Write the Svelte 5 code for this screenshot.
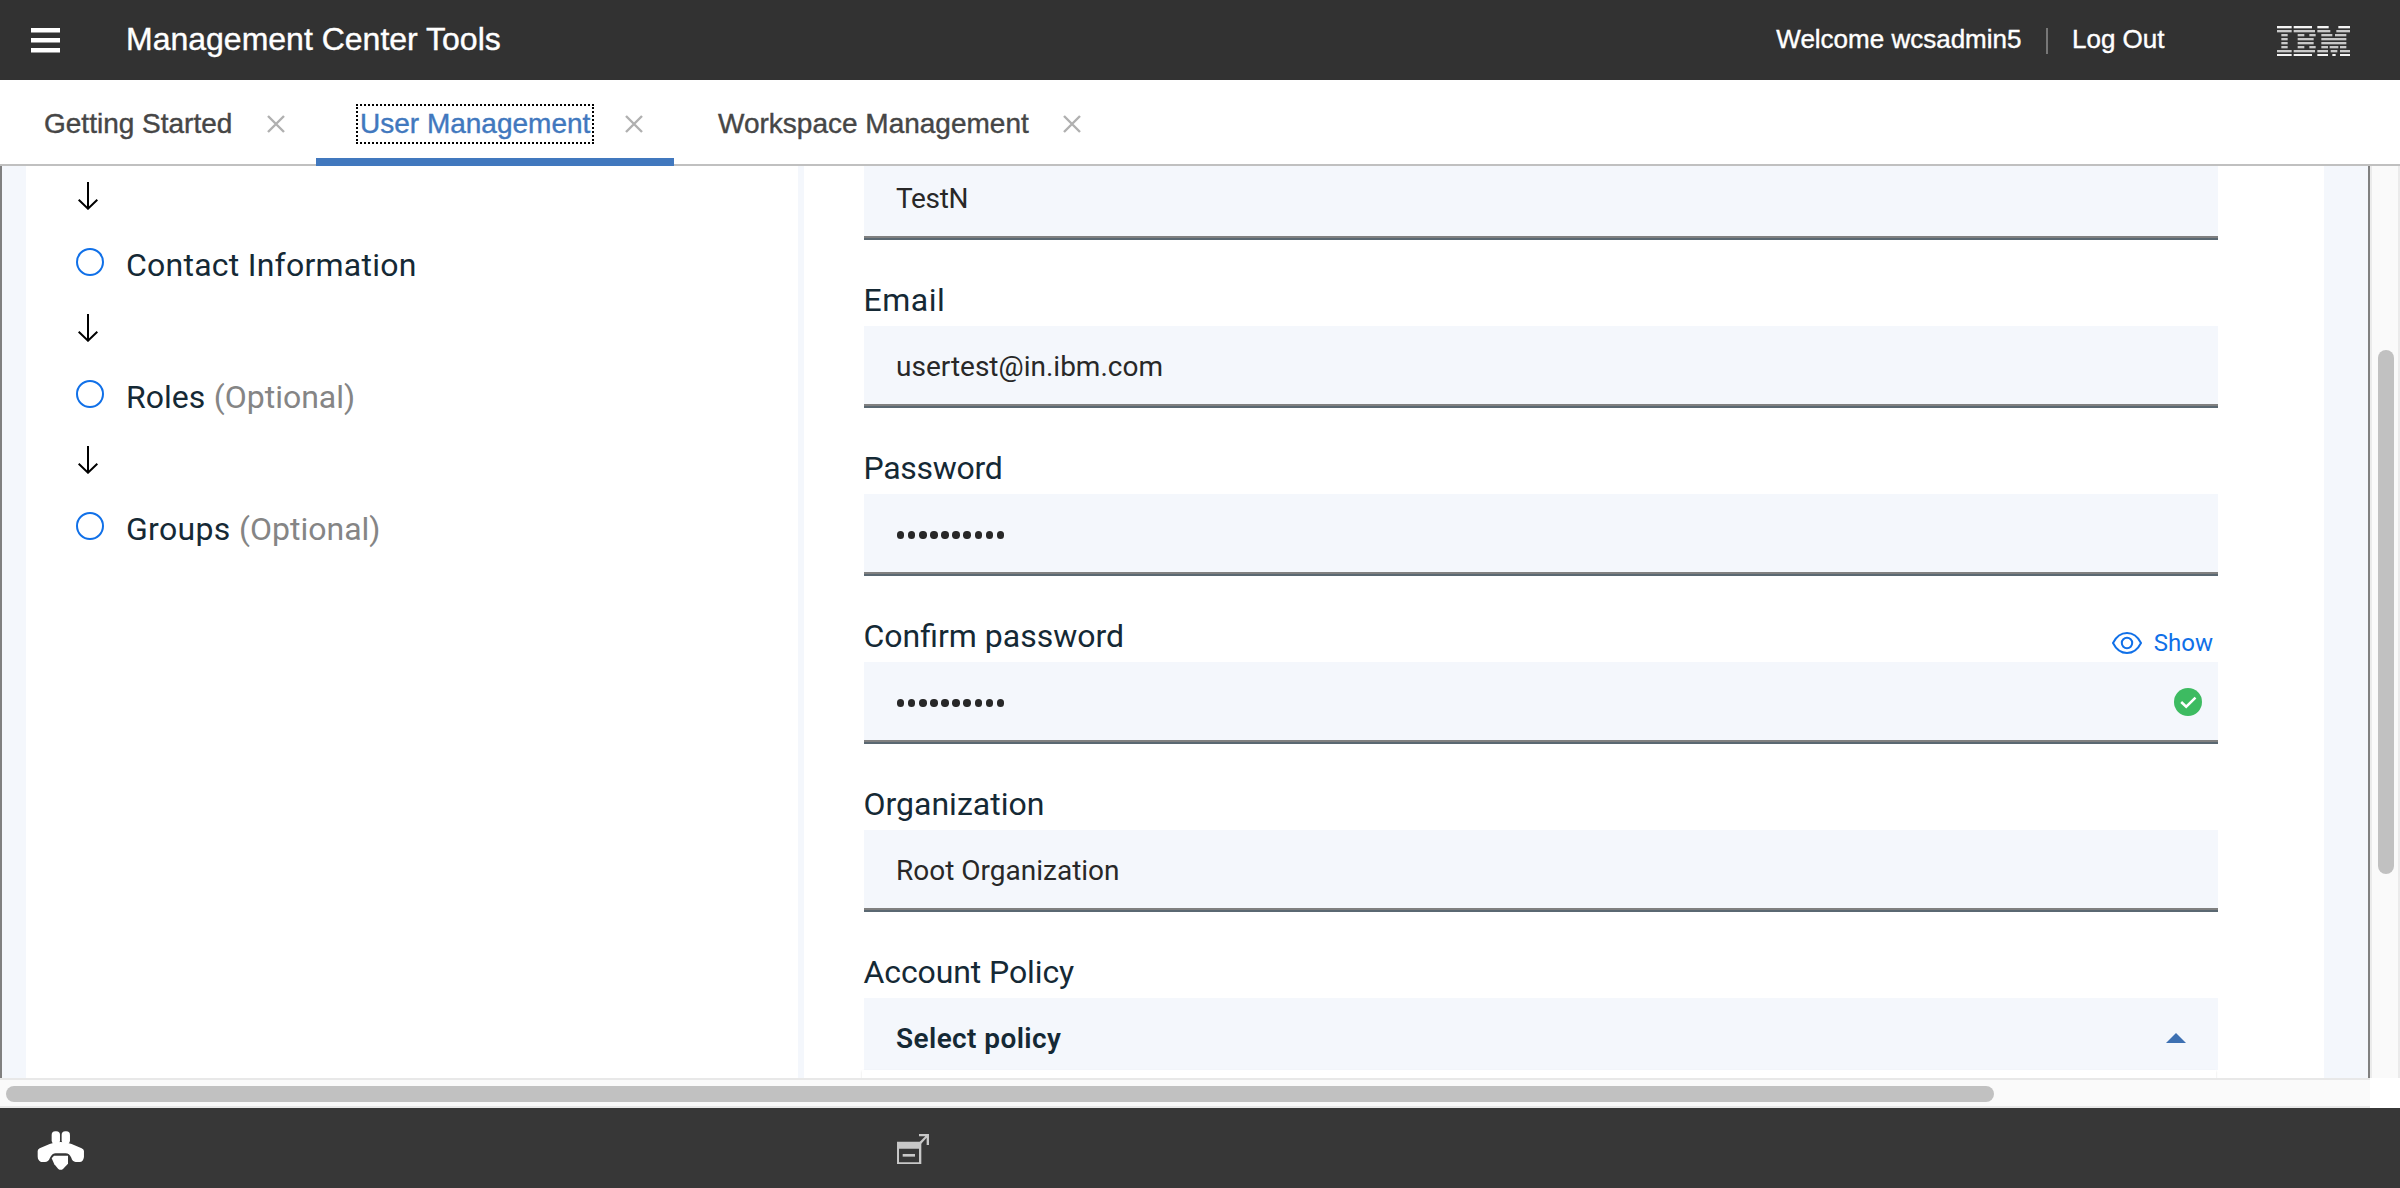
<script>
  const tabs = [
    { id: 'getting-started', label: 'Getting Started' },
    { id: 'user-management', label: 'User Management', active: true },
    { id: 'workspace', label: 'Workspace Management' }
  ];

  const steps = [
    { id: 'contact', label: 'Contact Information' },
    { id: 'roles', label: 'Roles', optional: true },
    { id: 'groups', label: 'Groups', optional: true }
  ];

  const fields = [
    { id: 'name', value: 'TestN' },
    { id: 'email', label: 'Email', value: 'usertest@in.ibm.com' },
    { id: 'password', label: 'Password', secret: 10 },
    { id: 'confirm', label: 'Confirm password', secret: 10, valid: true },
    { id: 'organization', label: 'Organization', value: 'Root Organization' }
  ];

  // Stripes of the logo: [start, end] pairs for each of the eight rows.
  const logoRows = [
    [[0, 44], [50, 105], [121, 155], [184, 220]],
    [[0, 44], [50, 114], [121, 160], [178, 220]],
    [[13, 32], [62, 82], [97, 116], [133, 166], [174, 208]],
    [[13, 32], [62, 110], [133, 208]],
    [[13, 32], [62, 110], [133, 208]],
    [[13, 32], [62, 82], [97, 116], [133, 153], [158, 184], [189, 208]],
    [[0, 44], [50, 114], [121, 153], [161, 181], [189, 220]],
    [[0, 44], [50, 105], [121, 153], [166, 176], [189, 220]]
  ];
</script>

<div class="app">
  <header class="topbar">
    <svg class="burger" viewBox="0 0 29 25" aria-hidden="true">
      <path d="M0 2.2H29M0 12.2H29M0 22.2H29" />
    </svg>
    <h1>Management Center Tools</h1>
    <span class="welcome">Welcome wcsadmin5</span>
    <span class="divider"></span>
    <span class="logout">Log Out</span>
    <svg class="logo" viewBox="0 0 219 90" aria-label="IBM">
      {#each logoRows as row, i}
        {#each row as [a, b]}
          <rect x={a} y={i * 12} width={b - a} height="7" class:bright={i === 0 || i === 7} />
        {/each}
      {/each}
    </svg>
  </header>

  <nav class="tabs">
    {#each tabs as tab (tab.id)}
      <div class="tab {tab.id}" class:active={tab.active}>
        <span class="tab-label">{tab.label}</span>
        <svg class="close" viewBox="0 0 18 18" aria-hidden="true">
          <path d="M1 1L17 17M17 1L1 17" />
        </svg>
      </div>
    {/each}
  </nav>

  <div class="viewport">
    <div class="page">
      <aside class="steps">
        {#each steps as step (step.id)}
          <div class="step-arrow">
            <svg viewBox="0 0 20 28" aria-hidden="true">
              <path d="M10 0V27M.7 17.7L10 26.7L19.3 17.7" />
            </svg>
          </div>
          <div class="step">
            <span class="ring"></span>
            <span class="step-label {step.id}">{step.label}</span>
            {#if step.optional}<span class="optional">(Optional)</span>{/if}
          </div>
        {/each}
      </aside>

      <main class="form">
        {#each fields as field (field.id)}
          {#if field.label}
            <div class="label-row">
              <span class="label {field.id}">{field.label}</span>
              {#if field.valid}
                <span class="show">
                  <svg viewBox="0 0 30 22" aria-hidden="true">
                    <path d="M1 11C4 5 9 1 15 1S26 5 29 11C26 17 21 21 15 21S4 17 1 11Z" />
                    <circle cx="15" cy="11" r="5.2" />
                  </svg>
                  Show
                </span>
              {/if}
            </div>
          {/if}
          <div class="field">
            {#if field.secret}
              <span class="dots">
                {#each Array(field.secret) as _}<i></i>{/each}
              </span>
            {:else}
              <span class="value value-{field.id}">{field.value}</span>
            {/if}
            {#if field.valid}
              <svg class="check" viewBox="0 0 28 28" aria-hidden="true">
                <circle cx="14" cy="14" r="14" />
                <path d="M7.2 14L12.2 18.7L21.5 9.7" />
              </svg>
            {/if}
          </div>
        {/each}

        <div class="label-row"><span class="label policy">Account Policy</span></div>
        <div class="select">
          <span class="value">Select policy</span>
          <svg class="caret" viewBox="0 0 20 10" aria-hidden="true"><path d="M0 10L10 0L20 10Z" /></svg>
        </div>
        <div class="options"></div>
      </main>
    </div>
    <div class="vbar"><div class="vthumb"></div></div>
    <div class="hbar"><div class="hthumb"></div></div>
  </div>

  <footer class="bottombar">
    <svg class="bee" viewBox="112 304 142 118" aria-hidden="true">
      <rect x="156" y="305" width="25" height="38" rx="11" />
      <rect x="186" y="305" width="25" height="38" rx="11" />
      <path d="M114 364Q114 359 120 356L150 343Q165 337 183 337Q201 337 216 343L246 356Q253 359 253 364V382Q251 397 240 397H228Q218 395 215 384Q209 371 198 371H168Q158 371 151 384Q146 397 136 397H124Q114 393 114 380Z" />
      <path d="M156 386L163 378H205V402L190 418Q183 423 176 418L164 404Z" />
    </svg>
    <svg class="window" viewBox="414 611 96 91" aria-hidden="true">
      <path class="frame" d="M414 634H487V702H414ZM420 655V696H480V655Z" />
      <rect x="431" y="671" width="37" height="8" />
      <path d="M480 611H510V644H503V622L486 641L481 636L499 618H480Z" />
    </svg>
  </footer>
</div>

<style>
  :global(body) {
    margin: 0;
    background: #fff;
  }

  .app {
    display: flex;
    flex-direction: column;
    width: 2400px;
    height: 1188px;
    overflow: hidden;
    font-family: 'Liberation Sans', Arial, sans-serif;
    background: #fff;
  }

  .app :global(*) {
    box-sizing: border-box;
  }

  /* Top bar */
  .topbar {
    display: flex;
    height: 80px;
    padding: 0 50px 0 31px;
    background: #323232;
    color: #fff;
    line-height: 78px;
    white-space: nowrap;
    -webkit-text-stroke: 0.4px currentColor;
  }

  .burger {
    width: 29px;
    height: 25px;
    margin-top: 28px;
    fill: none;
    stroke: #fff;
    stroke-width: 4.4;
  }

  h1 {
    margin: 0 auto 0 66px;
    font-size: 32px;
    font-weight: 400;
  }

  .welcome,
  .logout {
    font-size: 26px;
  }

  .divider {
    width: 2px;
    height: 26px;
    margin: 28px 23.5px 0 25px;
    background: #777;
  }

  .logo {
    width: 73px;
    height: 30px;
    margin: 26px 0 0 112.5px;
    fill: #c9c9c9;
  }

  .logo .bright {
    fill: #f4f4f4;
  }

  /* Tabs */
  .tabs {
    display: flex;
    height: 86px;
    border-bottom: 2px solid #c0c0c0;
  }

  .tab {
    display: flex;
    align-items: center;
    justify-content: space-between;
    height: 86px;
    padding: 2px 0 0;
    color: #464646;
    font-size: 28px;
    line-height: 36px;
    white-space: nowrap;
    -webkit-text-stroke: 0.4px currentColor;
  }

  .getting-started {
    width: 316px;
    padding-left: 44px;
    padding-right: 31px;
  }

  .user-management {
    width: 358px;
    padding-left: 42px;
    padding-right: 31px;
  }

  .workspace {
    width: 438px;
    padding-left: 44px;
    padding-right: 31px;
  }

  .active {
    color: #4178be;
    background: linear-gradient(#4178be, #4178be) bottom / 100% 8.5px no-repeat;
  }

  .active .tab-label {
    padding: 0 2px;
    outline: 2px dotted #000;
  }

  .close {
    width: 18px;
    height: 18px;
    fill: none;
    stroke: #b0b0b0;
    stroke-width: 2.4;
  }

  /* Scrolling area */
  .viewport {
    display: grid;
    grid-template: 912px 30px / 2370px 30px;
    height: 942px;
  }

  .page {
    display: flex;
    overflow: hidden;
    padding: 0 44px 0 24px;
    border: solid #808080;
    border-width: 0 2px;
    background: #f4f7fc;
    font-family: Roboto, 'Noto Sans', sans-serif;
    white-space: nowrap;
  }

  .steps {
    width: 772px;
    height: 915px;
    margin: -3px 6px 0 0;
    padding-left: 50px;
    background: #fff;
  }

  .step-arrow {
    display: flex;
    align-items: center;
    height: 66px;
    padding-left: 2px;
  }

  .step-arrow svg {
    width: 20px;
    height: 28px;
    fill: none;
    stroke: #000;
    stroke-width: 2;
  }

  .step {
    display: flex;
    align-items: center;
    height: 66px;
    color: #152935;
    font-size: 32px;
  }

  .ring {
    width: 28px;
    height: 28px;
    margin-right: 22px;
    border: 2px solid #1070e8;
    border-radius: 50%;
  }

  .step-label,
  .optional {
    padding-top: 5px;
    line-height: 60px;
  }

  .step-label.contact {
    letter-spacing: 0.24px;
  }

  .step-label.groups {
    letter-spacing: 0.3px;
  }

  .optional {
    margin-left: 8.5px;
    color: #858585;
  }

  .form {
    width: 1520px;
    height: 920px;
    margin-top: -8px;
    padding: 0 106px 0 60px;
    background: #fff;
  }

  .label-row {
    display: flex;
    justify-content: space-between;
    height: 86px;
    padding: 40px 5px 6px 0;
    color: #152935;
    font-size: 32px;
    line-height: 40px;
  }

  .label {
    margin-left: -0.5px;
  }

  .label.email {
    letter-spacing: 0.5px;
  }

  .label.password {
    letter-spacing: -0.28px;
  }

  .label.policy {
    letter-spacing: -0.1px;
  }

  .show {
    display: flex;
    align-items: center;
    gap: 12px;
    height: 40px;
    padding-top: 14px;
    color: #1070e8;
    font-size: 24px;
    line-height: 29px;
  }

  .show svg {
    width: 30px;
    height: 22px;
    fill: none;
    stroke: #1070e8;
    stroke-width: 2;
  }

  .field {
    display: flex;
    align-items: center;
    justify-content: space-between;
    height: 82px;
    padding: 0 16px 0 32px;
    border-bottom: 2px solid #5a6872;
    background: linear-gradient(#808080, #808080) bottom / 100% 2px no-repeat #f4f7fc;
    color: #282828;
    font-size: 28px;
  }

  .value {
    padding-top: 2px;
    line-height: 76px;
  }

  .value-name {
    letter-spacing: -0.3px;
  }

  .dots {
    display: flex;
    gap: 3.7px;
    padding: 2px 0 0 1px;
  }

  .dots i {
    width: 7.4px;
    height: 7.4px;
    border-radius: 50%;
    background: #282828;
  }

  .check {
    width: 28px;
    height: 28px;
  }

  .check circle {
    fill: #3dbb61;
  }

  .check path {
    fill: none;
    stroke: #fff;
    stroke-width: 2.5;
  }

  .select {
    display: flex;
    align-items: center;
    justify-content: space-between;
    height: 72px;
    padding: 8px 32px 0;
    background: #f4f7fc;
    color: #152935;
    font-size: 28px;
    font-weight: 600;
    letter-spacing: 0.4px;
  }

  .caret {
    width: 20px;
    height: 10px;
    fill: #3d70b2;
  }

  .options {
    height: 12px;
    margin: 0 2px 0 -2px;
    background: #fff;
    box-shadow: 0 1px 2px rgba(0, 0, 0, 0.12);
  }

  /* Scrollbars */
  .vbar {
    padding: 184px 4px 0 6px;
    border: solid #ebebeb;
    border-width: 0 2px;
    background: #fafafa;
  }

  .vthumb {
    width: 16px;
    height: 524px;
    border-radius: 8px;
    background: #c1c1c1;
  }

  .hbar {
    padding: 6px 0 0 6px;
    border: solid #e8e8e8;
    border-width: 2px 0;
    background: #fafafa;
  }

  .hthumb {
    width: 1988px;
    height: 16px;
    border-radius: 8px;
    background: #c1c1c1;
  }

  /* Bottom bar */
  .bottombar {
    display: flex;
    height: 80px;
    padding-left: 37.3px;
    background: #373737;
  }

  .bee {
    width: 47.3px;
    height: 39.3px;
    margin-top: 23.4px;
    fill: #fff;
  }

  .window {
    width: 32px;
    height: 30.3px;
    margin: 25.6px 0 0 812.4px;
    fill: #c8c8c8;
  }

  .window .frame {
    fill-rule: evenodd;
  }
</style>
